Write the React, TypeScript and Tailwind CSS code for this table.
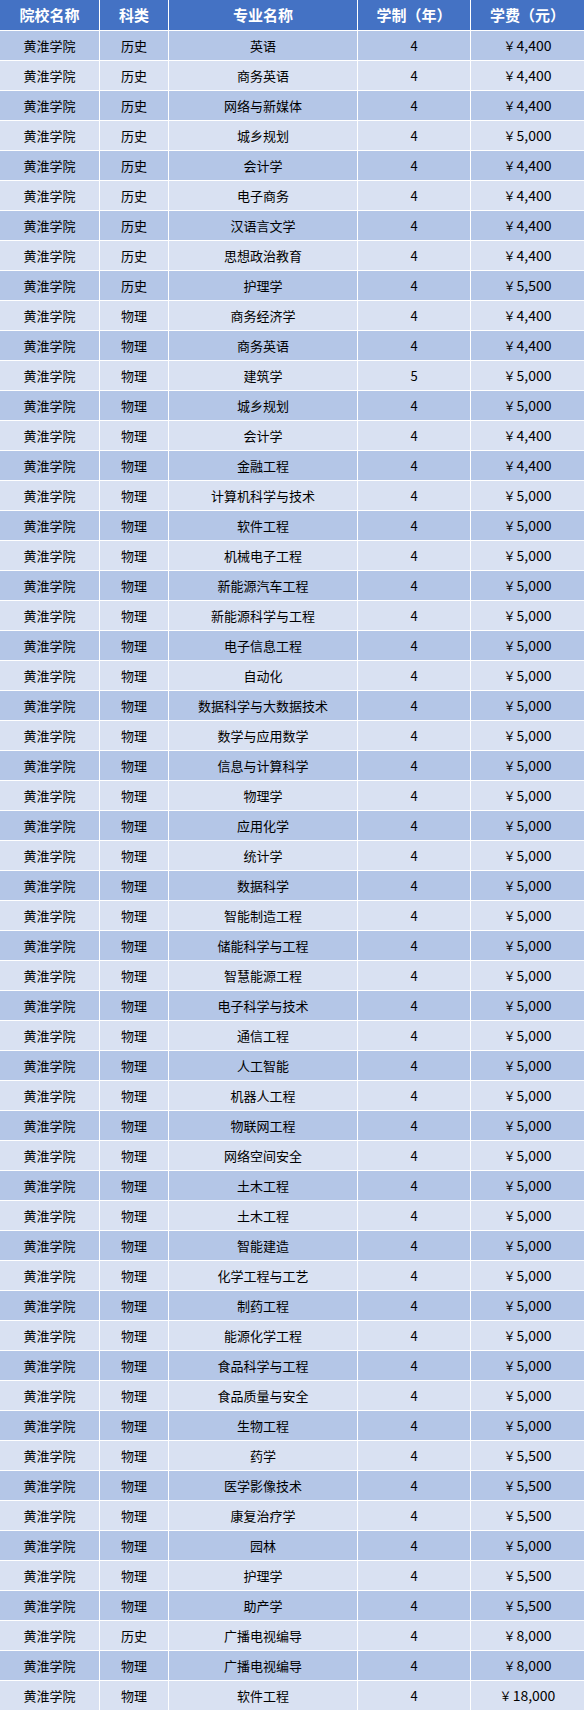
const rows: [string, string, string, number][] = [
  ["历史", "英语", "4", 4400],
  ["历史", "商务英语", "4", 4400],
  ["历史", "网络与新媒体", "4", 4400],
  ["历史", "城乡规划", "4", 5000],
  ["历史", "会计学", "4", 4400],
  ["历史", "电子商务", "4", 4400],
  ["历史", "汉语言文学", "4", 4400],
  ["历史", "思想政治教育", "4", 4400],
  ["历史", "护理学", "4", 5500],
  ["物理", "商务经济学", "4", 4400],
  ["物理", "商务英语", "4", 4400],
  ["物理", "建筑学", "5", 5000],
  ["物理", "城乡规划", "4", 5000],
  ["物理", "会计学", "4", 4400],
  ["物理", "金融工程", "4", 4400],
  ["物理", "计算机科学与技术", "4", 5000],
  ["物理", "软件工程", "4", 5000],
  ["物理", "机械电子工程", "4", 5000],
  ["物理", "新能源汽车工程", "4", 5000],
  ["物理", "新能源科学与工程", "4", 5000],
  ["物理", "电子信息工程", "4", 5000],
  ["物理", "自动化", "4", 5000],
  ["物理", "数据科学与大数据技术", "4", 5000],
  ["物理", "数学与应用数学", "4", 5000],
  ["物理", "信息与计算科学", "4", 5000],
  ["物理", "物理学", "4", 5000],
  ["物理", "应用化学", "4", 5000],
  ["物理", "统计学", "4", 5000],
  ["物理", "数据科学", "4", 5000],
  ["物理", "智能制造工程", "4", 5000],
  ["物理", "储能科学与工程", "4", 5000],
  ["物理", "智慧能源工程", "4", 5000],
  ["物理", "电子科学与技术", "4", 5000],
  ["物理", "通信工程", "4", 5000],
  ["物理", "人工智能", "4", 5000],
  ["物理", "机器人工程", "4", 5000],
  ["物理", "物联网工程", "4", 5000],
  ["物理", "网络空间安全", "4", 5000],
  ["物理", "土木工程", "4", 5000],
  ["物理", "土木工程", "4", 5000],
  ["物理", "智能建造", "4", 5000],
  ["物理", "化学工程与工艺", "4", 5000],
  ["物理", "制药工程", "4", 5000],
  ["物理", "能源化学工程", "4", 5000],
  ["物理", "食品科学与工程", "4", 5000],
  ["物理", "食品质量与安全", "4", 5000],
  ["物理", "生物工程", "4", 5000],
  ["物理", "药学", "4", 5500],
  ["物理", "医学影像技术", "4", 5500],
  ["物理", "康复治疗学", "4", 5500],
  ["物理", "园林", "4", 5000],
  ["物理", "护理学", "4", 5500],
  ["物理", "助产学", "4", 5500],
  ["历史", "广播电视编导", "4", 8000],
  ["物理", "广播电视编导", "4", 8000],
  ["物理", "软件工程", "4", 18000],
];

const headers = ["院校名称", "科类", "专业名称", "学制（年）", "学费（元）"];

export default function App() {
  return (
    <div
      className="w-[584px] bg-white grid grid-cols-[99px_68px_188px_112px_113px] gap-px pb-px text-[13px] text-black"
      style={{ fontFamily: '"Noto Sans CJK SC", "Noto Sans", sans-serif' }}
    >
      {headers.map((h) => (
        <div
          key={h}
          className="h-[30px] bg-[#4472c4] text-white font-bold text-[15px] flex items-center justify-center"
        >
          {h}
        </div>
      ))}
      {rows.map((r, i) => {
        // alternate banding like the excel table style
        const bg = i % 2 === 0 ? "bg-[#b4c6e7]" : "bg-[#d9e1f2]";
        const cells = ["黄淮学院", r[0], r[1], r[2]];
        return (
          <>
            {cells.map((cell, j) => (
              <div
                key={i + "-" + j}
                className={`h-[29px] flex items-center justify-center ${bg}`}
              >
                {cell}
              </div>
            ))}
            <div
              key={i + "-fee"}
              className={`h-[29px] flex items-center justify-center ${bg}`}
            >
              <span className="text-[12px] mr-px">￥</span>
              <span className="text-[14px]">{r[3].toLocaleString("en-US")}</span>
            </div>
          </>
        );
      })}
    </div>
  );
}
